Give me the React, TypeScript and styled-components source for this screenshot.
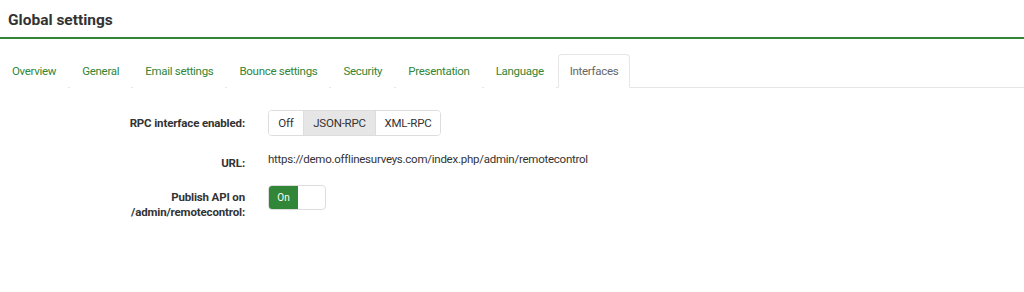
import React from "react";
import styled, { createGlobalStyle } from "styled-components";

const Global = createGlobalStyle`
  body { margin: 0; background: #fff; font-family: Roboto, "Liberation Sans", sans-serif; color: #333; }
`;

const Page = styled.div`
  width: 1024px;
`;

const Header = styled.div`
  padding: 10px 8px 7px;
  border-bottom: 2px solid #328637;
`;

const Title = styled.h1`
  margin: 0;
  font-size: 15.5px;
  font-weight: 700;
  line-height: 20px;
  color: #333;
`;

const Tabs = styled.ul`
  list-style: none;
  margin: 15px 0 0;
  padding: 0;
  display: flex;
  border-bottom: 1px solid #e6e6e6;
`;

const Tab = styled.li<{ $active?: boolean }>`
  margin-right: 2px;
  margin-bottom: -1px;
  padding: 0 11px;
  height: 32px;
  display: flex;
  align-items: center;
  font-size: 11.5px;
  letter-spacing: -0.3px;
  color: ${(p) => (p.$active ? "#666" : "#328637")};
  border: 1px solid ${(p) => (p.$active ? "#e6e6e6" : "transparent")};
  border-bottom-color: ${(p) => (p.$active ? "#fff" : "transparent")};
  border-radius: 4px 4px 0 0;
  background: #fff;
`;

const Form = styled.div`
  padding-top: 22px;
  display: grid;
  grid-template-columns: 245px 1fr;
  column-gap: 23px;
  row-gap: 14px;
  align-items: start;
`;

const Label = styled.div<{ $pt?: number }>`
  text-align: right;
  font-weight: 700;
  font-size: 11.5px;
  letter-spacing: -0.15px;
  line-height: 15px;
  color: #333;
  padding-top: ${(p) => p.$pt ?? 0}px;
`;

const BtnGroup = styled.div`
  display: inline-flex;
  border: 1px solid #ddd;
  border-radius: 4px;
  overflow: hidden;
  height: 24px;
  width: fit-content;
`;

const Btn = styled.div<{ $active?: boolean; $w: number }>`
  width: ${(p) => p.$w}px;
  display: flex;
  align-items: center;
  justify-content: center;
  font-size: 11.5px;
  letter-spacing: -0.2px;
  color: #333;
  background: ${(p) => (p.$active ? "#e6e6e6" : "#fff")};
  border-left: 1px solid #ddd;
  &:first-child { border-left: none; }
`;

const Url = styled.div`
  font-size: 11.5px;
  letter-spacing: -0.25px;
  line-height: 15px;
  padding-top: 2px;
  color: #333;
`;

const Toggle = styled.div`
  display: flex;
  width: 56px;
  height: 23px;
  border: 1px solid #ddd;
  border-radius: 4px;
  overflow: hidden;
`;

const ToggleOn = styled.div`
  width: 29px;
  background: #328637;
  color: #fff;
  font-size: 10px;
  display: flex;
  align-items: center;
  justify-content: center;
`;

export default function App() {
  const tabs = ["Overview", "General", "Email settings", "Bounce settings", "Security", "Presentation", "Language", "Interfaces"];
  return (
    <Page>
      <Global />
      <Header>
        <Title>Global settings</Title>
      </Header>
      <Tabs>
        {tabs.map((t) => (
          <Tab key={t} $active={t === "Interfaces"}>{t}</Tab>
        ))}
      </Tabs>
      <Form>
        <Label $pt={6}>RPC interface enabled:</Label>
        <BtnGroup>
          <Btn $w={34}>Off</Btn>
          <Btn $w={71} $active>JSON-RPC</Btn>
          <Btn $w={64}>XML-RPC</Btn>
        </BtnGroup>
        <Label $pt={6}>URL:</Label>
        <Url>https://demo.offlinesurveys.com/index.php/admin/remotecontrol</Url>
        <Label $pt={5}>Publish API on<br />/admin/remotecontrol:</Label>
        <Toggle>
          <ToggleOn>On</ToggleOn>
        </Toggle>
      </Form>
    </Page>
  );
}
